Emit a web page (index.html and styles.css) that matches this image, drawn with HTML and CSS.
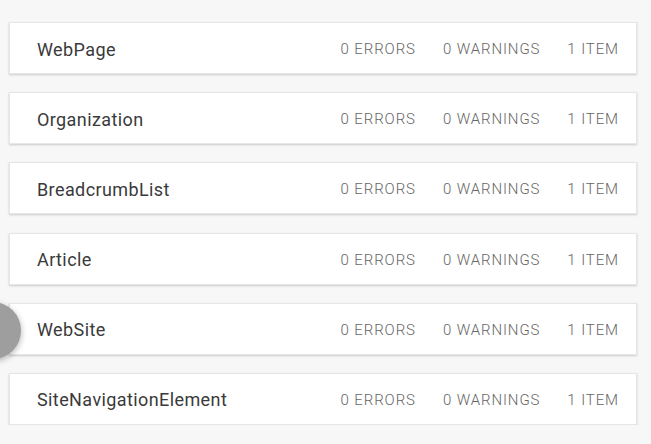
FILE: index.html
```html
<!DOCTYPE html>
<html>
<head>
<meta charset="utf-8">
<title>Structured data</title>
<link rel="stylesheet" href="styles.css">
</head>
<body>
<div class="fab"></div>
<div class="list">
  <div class="card">
    <div class="type">WebPage</div>
    <div class="stats"><span>0 ERRORS</span><span>0 WARNINGS</span><span>1 ITEM</span></div>
  </div>
  <div class="card">
    <div class="type">Organization</div>
    <div class="stats"><span>0 ERRORS</span><span>0 WARNINGS</span><span>1 ITEM</span></div>
  </div>
  <div class="card">
    <div class="type">BreadcrumbList</div>
    <div class="stats"><span>0 ERRORS</span><span>0 WARNINGS</span><span>1 ITEM</span></div>
  </div>
  <div class="card">
    <div class="type">Article</div>
    <div class="stats"><span>0 ERRORS</span><span>0 WARNINGS</span><span>1 ITEM</span></div>
  </div>
  <div class="card">
    <div class="type">WebSite</div>
    <div class="stats"><span>0 ERRORS</span><span>0 WARNINGS</span><span>1 ITEM</span></div>
  </div>
  <div class="card">
    <div class="type">SiteNavigationElement</div>
    <div class="stats"><span>0 ERRORS</span><span>0 WARNINGS</span><span>1 ITEM</span></div>
  </div>
</div>
</body>
</html>
```

FILE: styles.css
```css
body {
  margin: 0;
  background-color: #f7f7f7;
  font-family: Roboto, "Liberation Sans", sans-serif;
  overflow: hidden;
}
.list {
  padding: 22px 0 0 9px;
  width: 628px;
  display: flex;
  flex-direction: column;
  gap: 18.2px;
}
.card {
  box-sizing: border-box;
  height: 52px;
  background-color: white;
  border: 1px solid #e6e6e6;
  box-shadow: 0 1px 2px rgba(0,0,0,0.18);
  display: flex;
  align-items: center;
  justify-content: space-between;
  padding: 2px 17px 0 27px;
}
.type {
  font-size: 18px;
  color: #3a3a3a;
  letter-spacing: 0.4px;
}
.stats {
  display: flex;
  gap: 27px;
  font-size: 15px;
  font-weight: 300;
  letter-spacing: 0.9px;
  color: #666;
}
/* floating button peeking from the left edge */
.fab {
  position: absolute;
  left: -36px;
  top: 302px;
  width: 57px;
  height: 57px;
  border-radius: 50%;
  background-color: #9e9e9e;
  box-shadow: 0 2px 6px rgba(0,0,0,0.3);
  z-index: 2;
}
```
